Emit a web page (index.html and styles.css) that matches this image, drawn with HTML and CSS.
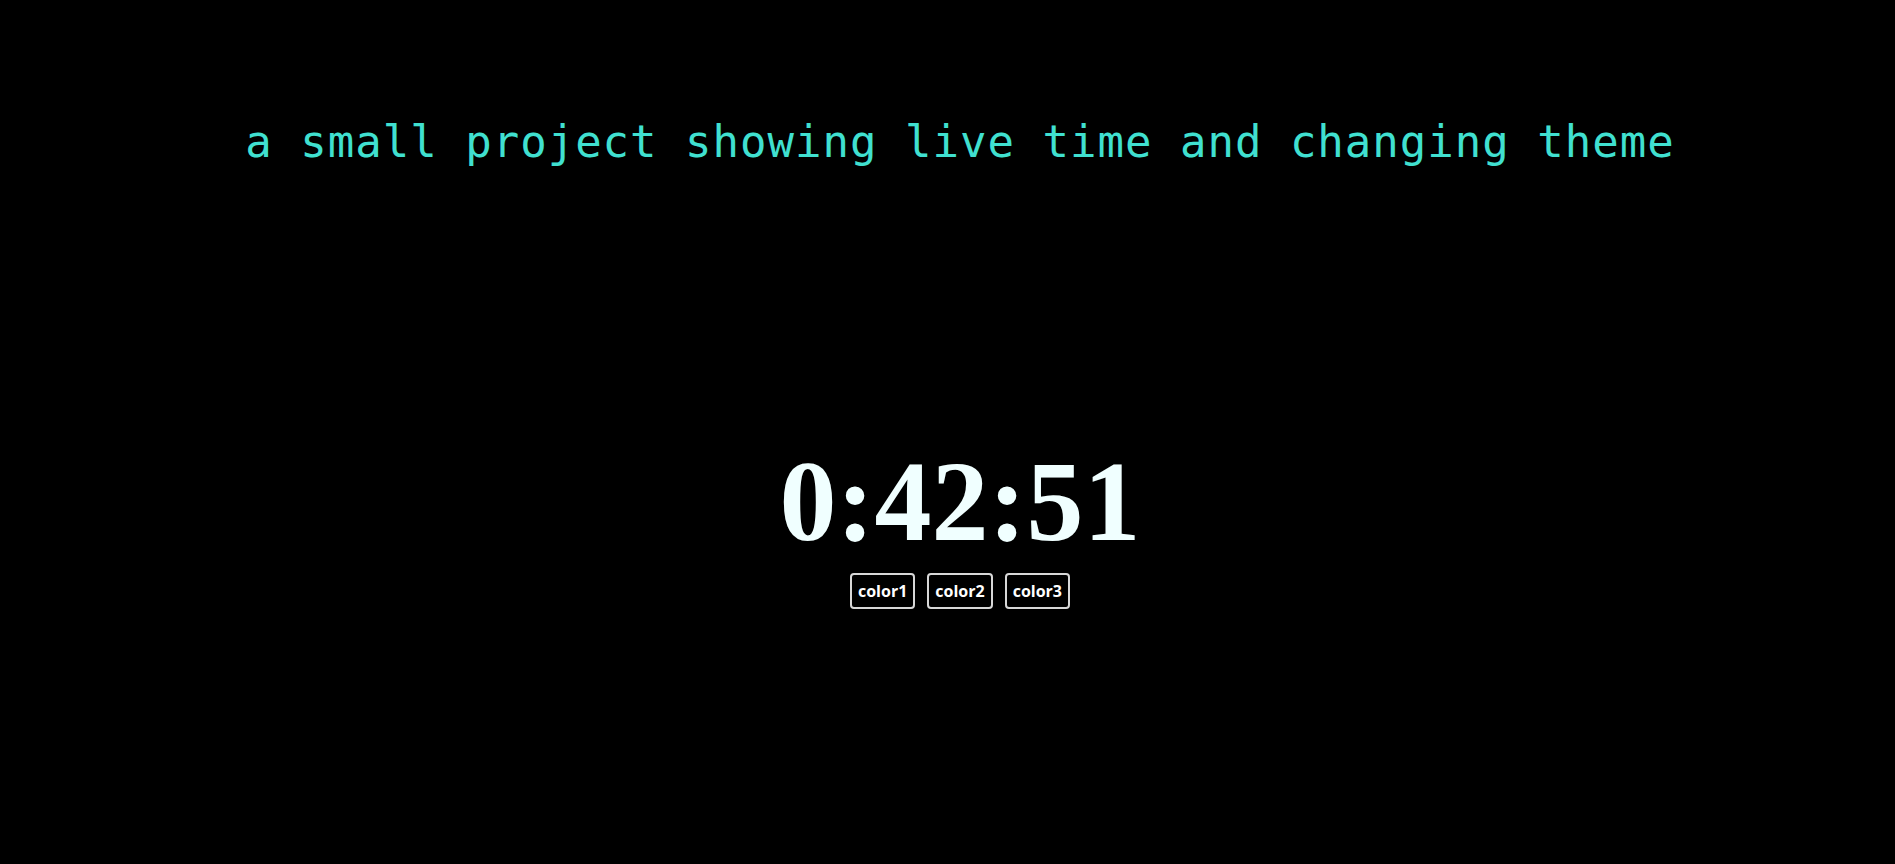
FILE: index.html
```html
<!DOCTYPE html>
<html lang="en">
<head>
<meta charset="utf-8">
<title>Live time</title>
<link rel="stylesheet" href="styles.css">
</head>
<body>
<div class="page">
  <h1 class="title">a small project showing live time and changing theme</h1>
  <div class="clock">
    <div class="time">0:42:51</div>
    <div class="buttons">
      <button class="btn">color1</button>
      <button class="btn">color2</button>
      <button class="btn">color3</button>
    </div>
  </div>
</div>
</body>
</html>
```
FILE: styles.css
```css
html, body {
  margin: 0;
  padding: 0;
  background: #000;
  height: 100%;
}

.page {
  display: flex;
  flex-direction: column;
  align-items: center;
  padding-left: 25px;
  min-height: 100%;
  box-sizing: border-box;
}

.title {
  margin: 116px 0 0 0;
  font-family: "DejaVu Sans Mono", monospace;
  font-size: 44px;
  font-weight: normal;
  letter-spacing: 1px;
  line-height: normal;
  color: #40e0d0;
  text-align: center;
  white-space: nowrap;
}

.clock {
  margin-top: 269px;
  display: flex;
  flex-direction: column;
  align-items: center;
  gap: 5px;
}

.time {
  font-family: "Liberation Serif", "Times New Roman", serif;
  font-weight: bold;
  font-size: 114px;
  line-height: normal;
  color: #f0ffff;
}

.buttons {
  display: flex;
  gap: 12px;
}

.btn {
  font-family: "Open Sans", "Liberation Sans", sans-serif;
  font-weight: bold;
  font-size: 16px;
  line-height: 22px;
  color: #fff;
  background: #000;
  border: 2px solid #d8d8d8;
  border-radius: 4px;
  padding: 5px 6px;
  cursor: pointer;
}
```
